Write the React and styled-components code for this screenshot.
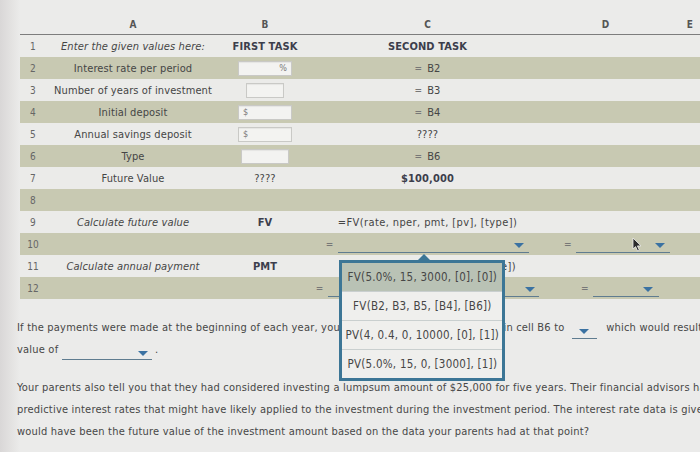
import React from 'react';
import styled, { createGlobalStyle } from 'styled-components';

const Global = createGlobalStyle`
  html, body { margin: 0; padding: 0; }
  body {
    width: 700px;
    height: 452px;
    overflow: hidden;
    background: linear-gradient(to right, #d9d7d7 0, #e4e3e2 12px, #ebebea 20px);
    font-family: "DejaVu Sans Condensed", "DejaVu Sans", Verdana, sans-serif;
    font-size: 11px;
    letter-spacing: 0.12px;
    color: #454545;
  }
`;

const Page = styled.div`
  width: 700px;
  height: 452px;
  overflow: hidden;
  display: flex;
  flex-direction: column;
`;

const Sheet = styled.div`
  margin-left: 20px;
  width: 690px;
`;

const cols = '30px 166px 98px 227px 129px 40px';

const HeaderRow = styled.div`
  display: grid;
  grid-template-columns: ${cols};
  height: 35px;
  box-sizing: border-box;
  align-items: end;
  padding-bottom: 4px;
  border-bottom: 1.5px solid #7d7d7d;
  font-weight: bold;
  font-size: 10px;
  color: #555;
`;

const Letter = styled.div`
  text-align: center;
`;

const Row = styled.div`
  display: grid;
  grid-template-columns: ${cols};
  height: 22px;
  align-items: center;
  background: ${p => (p.$band ? '#c8c9b2' : '#ebebe9')};
`;

const Num = styled.div`
  text-align: center;
  padding-right: 4px;
  font-size: 10px;
  color: #666;
`;

const Cell = styled.div`
  display: flex;
  align-items: center;
  justify-content: ${p => p.$left ? 'flex-start' : 'center'};
  padding-left: ${p => p.$pl || 0}px;
  white-space: nowrap;
  position: relative;
  font-style: ${p => (p.$italic ? 'italic' : 'normal')};
  font-weight: ${p => (p.$bold ? 'bold' : 'normal')};
  letter-spacing: ${p => p.$ls ?? 0.12}px;
  color: ${p => (p.$bold ? '#3c3e4c' : '#454545')};
`;

const Input = styled.div`
  width: ${p => p.$w}px;
  height: 15px;
  box-sizing: border-box;
  background: #f3f3f1;
  border: 1px solid #c9c9c6;
  box-shadow: inset 0 1px 1px rgba(0,0,0,0.06);
  display: flex;
  align-items: center;
  justify-content: ${p => p.$unit === '%' ? 'flex-end' : 'flex-start'};
  padding: 0 4px;
  font-size: 9px;
  color: #777;
`;

const Eq = styled.span`
  color: #777;
  font-size: 10px;
  margin-right: ${p => p.$gap ?? 5}px;
`;

const Select = styled.span`
  position: relative;
  display: inline-flex;
  align-items: center;
  justify-content: ${p => p.$center ? 'center' : 'flex-end'};
  width: ${p => p.$w}px;
  height: 13px;
  box-sizing: border-box;
  padding-right: ${p => p.$center ? 0 : (p.$pr ?? 5)}px;
  border-bottom: 1.5px solid #5f7c90;
  margin-top: ${p => p.$mt ?? 4}px;
  margin-left: ${p => p.$ml ?? 0}px;
  margin-right: ${p => p.$mr ?? 0}px;
  vertical-align: -3px;
  letter-spacing: 0.12px;
`;

const Arrow = styled.span`
  width: 0;
  height: 0;
  border-left: 5px solid transparent;
  border-right: 5px solid transparent;
  border-top: 5px solid #3b72a2;
`;

const Popup = styled.div`
  position: absolute;
  z-index: 10;
  left: 1px;
  top: calc(100% + 8px);
  width: 166px;
  box-sizing: border-box;
  border: 3px solid #3c7696;
  background: #efefed;
  display: flex;
  flex-direction: column;
  &::before {
    content: '';
    position: absolute;
    top: -9px;
    left: 76px;
    border-left: 6px solid transparent;
    border-right: 6px solid transparent;
    border-bottom: 6px solid #3c7696;
  }
`;

const Option = styled.div`
  height: 28px;
  display: flex;
  align-items: center;
  justify-content: center;
  white-space: nowrap;
  font-size: 11.5px;
  letter-spacing: 0.25px;
  color: #464646;
  background: ${p => (p.$active ? '#b9c2b5' : '#efefed')};
  & + & {
    border-top: 1px solid #c9cfcf;
  }
`;

const Cursor = styled.svg`
  position: absolute;
  left: 91px;
  top: 1px;
  width: 10px;
  height: 15px;
`;

const Text = styled.div`
  margin-left: 17px;
  margin-top: ${p => p.$mt}px;
  line-height: ${p => p.$lh}px;
  white-space: nowrap;
  letter-spacing: 0.2px;
  color: #474747;
`;

const Line = styled.div``;

const options = [
  'FV(5.0%, 15, 3000, [0], [0])',
  'FV(B2, B3, B5, [B4], [B6])',
  'PV(4, 0.4, 0, 10000, [0], [1])',
  'PV(5.0%, 15, 0, [3000], [1])',
];

export default function App() {
  return (
    <Page>
      <Global />
      <Sheet>
        <HeaderRow>
          <Letter />
          <Letter>A</Letter>
          <Letter>B</Letter>
          <Letter>C</Letter>
          <Letter>D</Letter>
          <Letter>E</Letter>
        </HeaderRow>

        <Row>
          <Num>1</Num>
          <Cell $italic>Enter the given values here:</Cell>
          <Cell $bold>FIRST TASK</Cell>
          <Cell $bold>SECOND TASK</Cell>
          <Cell />
          <Cell />
        </Row>
        <Row $band>
          <Num>2</Num>
          <Cell>Interest rate per period</Cell>
          <Cell><Input $w={54} $unit="%">%</Input></Cell>
          <Cell><Eq>=</Eq>B2</Cell>
          <Cell />
          <Cell />
        </Row>
        <Row>
          <Num>3</Num>
          <Cell>Number of years of investment</Cell>
          <Cell><Input $w={38} /></Cell>
          <Cell><Eq>=</Eq>B3</Cell>
          <Cell />
          <Cell />
        </Row>
        <Row $band>
          <Num>4</Num>
          <Cell>Initial deposit</Cell>
          <Cell><Input $w={54} $unit="$">$</Input></Cell>
          <Cell><Eq>=</Eq>B4</Cell>
          <Cell />
          <Cell />
        </Row>
        <Row>
          <Num>5</Num>
          <Cell>Annual savings deposit</Cell>
          <Cell><Input $w={54} $unit="$">$</Input></Cell>
          <Cell>????</Cell>
          <Cell />
          <Cell />
        </Row>
        <Row $band>
          <Num>6</Num>
          <Cell>Type</Cell>
          <Cell><Input $w={48} /></Cell>
          <Cell><Eq>=</Eq>B6</Cell>
          <Cell />
          <Cell />
        </Row>
        <Row>
          <Num>7</Num>
          <Cell>Future Value</Cell>
          <Cell>????</Cell>
          <Cell $bold>$100,000</Cell>
          <Cell />
          <Cell />
        </Row>
        <Row $band>
          <Num>8</Num>
          <Cell />
          <Cell />
          <Cell />
          <Cell />
          <Cell />
        </Row>
        <Row>
          <Num>9</Num>
          <Cell $italic>Calculate future value</Cell>
          <Cell $bold>FV</Cell>
          <Cell $ls={0.4}>=FV(rate, nper, pmt, [pv], [type])</Cell>
          <Cell />
          <Cell />
        </Row>
        <Row $band>
          <Num>10</Num>
          <Cell />
          <Cell />
          <Cell>
            <Eq>=</Eq>
            <Select $w={191} $pr={5}>
              <Arrow />
              <Popup>
                {options.map((o, i) => (
                  <Option key={o} $active={i === 0}>{o}</Option>
                ))}
              </Popup>
            </Select>
          </Cell>
          <Cell $left $pl={23}>
            <Eq $gap={4}>=</Eq>
            <Select $w={96} $pr={5}><Arrow /></Select>
            <Cursor viewBox="0 0 10 15">
              <path d="M1 1 L1 12 L3.6 9.6 L5.6 14 L7.4 13.2 L5.4 8.9 L9 8.9 Z" fill="#2b2b2b" stroke="#f0f0f0" strokeWidth="0.8" />
            </Cursor>
          </Cell>
          <Cell />
        </Row>
        <Row>
          <Num>11</Num>
          <Cell $italic>Calculate annual payment</Cell>
          <Cell $bold>PMT</Cell>
          <Cell $ls={0.4}>=PMT(rate, nper, pv, [fv], [type])</Cell>
          <Cell />
          <Cell />
        </Row>
        <Row $band>
          <Num>12</Num>
          <Cell />
          <Cell />
          <Cell>
            <Eq>=</Eq>
            <Select $w={211} $pr={4}><Arrow /></Select>
          </Cell>
          <Cell $left $pl={40}>
            <Eq $gap={4}>=</Eq>
            <Select $w={66} $pr={6}><Arrow /></Select>
          </Cell>
          <Cell />
        </Row>
      </Sheet>

      <Text $mt={18} $lh={21}>
        <Line>
          If the payments were made at the beginning of each year, you would have to enter this value in cell B6 to{' '}
          <Select $w={25} $center $mt={0} $ml={4} $mr={6}><Arrow /></Select>{' '}which would result in a future
        </Line>
        <Line>
          value of <Select $w={90} $pr={4} $mt={0}><Arrow /></Select> .
        </Line>
      </Text>

      <Text $mt={17} $lh={22}>
        <Line>Your parents also tell you that they had considered investing a lumpsum amount of $25,000 for five years. Their financial advisors had provided them</Line>
        <Line>predictive interest rates that might have likely applied to the investment during the investment period. The interest rate data is given below. What</Line>
        <Line>would have been the future value of the investment amount based on the data your parents had at that point?</Line>
      </Text>
    </Page>
  );
}
